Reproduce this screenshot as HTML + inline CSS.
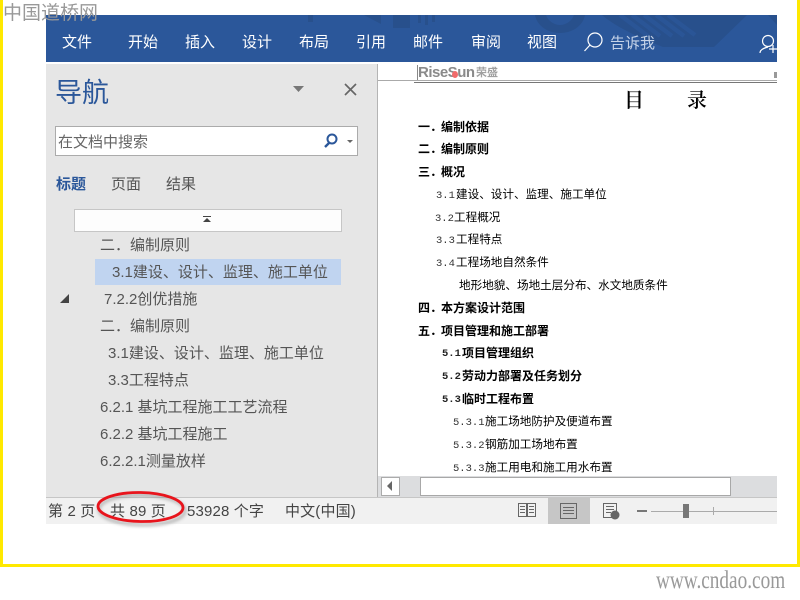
<!DOCTYPE html>
<html lang="zh"><head><meta charset="utf-8"><style>
html,body{margin:0;padding:0;background:#fff}
#p{position:relative;width:800px;height:600px;overflow:hidden;background:#fff;font-family:"Liberation Sans","Noto Sans CJK SC",sans-serif}
#p div,#p span.t{position:absolute}
.t{position:absolute;white-space:nowrap;line-height:20px;height:20px;margin-top:1px}
.m{font-size:15px;color:#fff;top:32px}
.n{font-size:15px;color:#555;font-family:"Liberation Sans","Noto Sans CJK SC",sans-serif}
.s{font-size:15px;color:#444;top:501px;letter-spacing:.15px}
.d{font-family:"Liberation Serif","WenQuanYi Zen Hei",serif;font-size:11.6px;color:#000}
.b{font-family:"Liberation Serif","Noto Sans CJK SC",sans-serif;font-size:12px;font-weight:700;color:#000;margin-top:0}
.o{font-family:"Liberation Mono",monospace;font-size:10.500px;color:#333;margin-top:2px}
.ob{font-family:"Liberation Mono",monospace;font-size:10.500px;font-weight:700;color:#222;margin-top:1px}
</style></head><body><div id="p">
<div style="left:0;top:0;width:3px;height:567px;background:#ffe900"></div>
<div style="left:0;top:564px;width:800px;height:3px;background:#ffe900"></div>
<div style="left:797px;top:0;width:3px;height:567px;background:#ffe900"></div>

<div style="left:46px;top:15px;width:731px;height:47px;background:#2b579a;overflow:hidden">
<svg width="731" height="47" style="position:absolute;left:0;top:0">
<g fill="#28508c">
<path d="M262 0h5v7h-5zM347 0h17v13h-17zM318 0h17v9zM372 0h3v8h-3zM379 0h3v10h-3zM386 0h3v7h-3z"/>
<path d="M489 0h50c-2 11-13 18-25 18s-23-7-25-18z"/>
<path d="M556 0H701L668 32H617C600 25 572 14 556 0z"/>
<path d="M722 0h9v10z"/>
</g>
<path d="M500 0h28c-2 6-8 10-14 10s-12-4-14-10z" fill="#2b579a"/>
<path d="M574 0l28 21M586 0l28 21M598 0l28 21M610 0l28 21M622 0l27 20" stroke="#2b579a" stroke-width="4.500" fill="none" opacity=".7"/>
<g stroke="#fff" fill="none" stroke-width="1.200">
<circle cx="549" cy="25" r="7"/><path d="M544 30l-5.500 6"/>
<circle cx="722" cy="26" r="5.500"/><path d="M714 38c0-3 4-5 8-6M723 34h8M727 30v8"/>
</g>
</svg>
</div>
<span class="t m" style="left:62px">文件</span>
<span class="t m" style="left:128px">开始</span>
<span class="t m" style="left:185px">插入</span>
<span class="t m" style="left:242px">设计</span>
<span class="t m" style="left:299px">布局</span>
<span class="t m" style="left:356px">引用</span>
<span class="t m" style="left:413px">邮件</span>
<span class="t m" style="left:471px">审阅</span>
<span class="t m" style="left:527px">视图</span>
<span class="t m" style="left:610px;color:#c5d3e8;top:33px">告诉我</span>

<div style="left:46px;top:64px;width:331px;height:434px;background:#e6e6e6"></div>
<div style="left:377px;top:64px;width:1px;height:434px;background:#b4b4b4"></div>
<span class="t" style="left:55px;top:78px;font-size:27px;line-height:28px;height:28px;color:#2b579a">导航</span>
<svg style="position:absolute;left:290px;top:81px" width="70" height="20">
<path d="M3 5h11l-5.500 6z" fill="#777"/>
<path d="M55 3l11 11M66 3L55 14" stroke="#666" stroke-width="1.700"/>
</svg>
<div style="left:55px;top:126px;width:301px;height:28px;background:#fff;border:1px solid #ababab"></div>
<span class="t" style="left:58px;top:132px;font-size:15px;color:#666">在文档中搜索</span>
<svg style="position:absolute;left:322px;top:132px" width="34" height="18">
<circle cx="10" cy="7" r="4.500" fill="none" stroke="#2b579a" stroke-width="2"/>
<path d="M7 11l-4 4" stroke="#2b579a" stroke-width="2.400"/>
<path d="M25 8h6l-3 3z" fill="#666"/>
</svg>
<span class="t" style="left:56px;top:174px;font-size:15px;color:#2b579a;font-weight:700">标题</span>
<span class="t" style="left:111px;top:174px;font-size:15px;color:#555">页面</span>
<span class="t" style="left:166px;top:174px;font-size:15px;color:#555">结果</span>

<div style="left:74px;top:209px;width:266px;height:21px;background:#fdfdfd;border:1px solid #c6c6c6"></div>
<svg style="position:absolute;left:203px;top:216px" width="10" height="8"><path d="M0 0h8v1H0zM4 2l4 4H0z" fill="#444"/></svg>
<div style="left:95px;top:259px;width:246px;height:26px;background:#c0d4f0"></div>
<svg style="position:absolute;left:60px;top:294px" width="9" height="9"><path d="M9 0v9H0z" fill="#444"/></svg>

<span class="t n" style="left:100px;top:235px">二．编制原则</span>
<span class="t n" style="left:112px;top:262px">3.1建设、设计、监理、施工单位</span>
<span class="t n" style="left:104px;top:289px">7.2.2创优措施</span>
<span class="t n" style="left:100px;top:316px">二．编制原则</span>
<span class="t n" style="left:108px;top:343px">3.1建设、设计、监理、施工单位</span>
<span class="t n" style="left:108px;top:370px">3.3工程特点</span>
<span class="t n" style="left:100px;top:397px">6.2.1 基坑工程施工工艺流程</span>
<span class="t n" style="left:100px;top:424px">6.2.2 基坑工程施工</span>
<span class="t n" style="left:100px;top:451px">6.2.2.1测量放样</span>

<!-- document header -->
<span class="t" style="left:418px;top:63px;margin-top:0;font-size:15px;font-weight:700;color:#8a8a8a;letter-spacing:-.5px">RiseSun</span>
<div style="left:452px;top:71px;width:6px;height:7px;border-radius:50%;background:#f06a6a"></div>
<span class="t" style="left:476px;top:63px;margin-top:0;font-size:11px;font-weight:700;color:#a0a0a0">荣盛</span>
<div style="left:774px;top:72px;width:3px;height:6px;background:#999"></div>
<div style="left:417px;top:65px;width:1px;height:16px;background:#888"></div>
<div style="left:378px;top:80px;width:399px;height:1px;background:#aaa"></div>
<div style="left:414px;top:82px;width:363px;height:1px;background:#777"></div>
<span class="t" style="left:624px;top:90px;font-size:20px;font-weight:600;color:#000;font-family:'Liberation Serif','Noto Serif CJK SC',serif">目</span>
<span class="t" style="left:687px;top:90px;font-size:20px;font-weight:600;color:#000;font-family:'Liberation Serif','Noto Serif CJK SC',serif">录</span>

<span class="t b" style="left:418px;top:117px">一．</span><span class="t b" style="left:441px;top:117px">编制依据</span>
<span class="t b" style="left:418px;top:139px">二．</span><span class="t b" style="left:441px;top:139px">编制原则</span>
<span class="t b" style="left:418px;top:162px">三．</span><span class="t b" style="left:441px;top:162px">概况</span>
<span class="t o" style="left:436px;top:184px">3.1</span><span class="t d" style="left:456px;top:184px">建设、设计、监理、施工单位</span>
<span class="t o" style="left:435px;top:207px">3.2</span><span class="t d" style="left:454px;top:207px">工程概况</span>
<span class="t o" style="left:436px;top:229px">3.3</span><span class="t d" style="left:456px;top:229px">工程特点</span>
<span class="t o" style="left:436px;top:252px">3.4</span><span class="t d" style="left:456px;top:252px">工程场地自然条件</span>
<span class="t d" style="left:459px;top:275px">地形地貌、场地土层分布、水文地质条件</span>
<span class="t b" style="left:418px;top:298px">四．</span><span class="t b" style="left:441px;top:298px">本方案设计范围</span>
<span class="t b" style="left:418px;top:321px">五．</span><span class="t b" style="left:441px;top:321px">项目管理和施工部署</span>
<span class="t ob" style="left:442px;top:343px">5.1</span><span class="t b" style="left:462px;top:343px">项目管理组织</span>
<span class="t ob" style="left:442px;top:366px">5.2</span><span class="t b" style="left:462px;top:366px">劳动力部署及任务划分</span>
<span class="t ob" style="left:442px;top:389px">5.3</span><span class="t b" style="left:462px;top:389px">临时工程布置</span>
<span class="t o" style="left:453px;top:411px">5.3.1</span><span class="t d" style="left:485px;top:411px">施工场地防护及便道布置</span>
<span class="t o" style="left:453px;top:434px">5.3.2</span><span class="t d" style="left:485px;top:434px">钢筋加工场地布置</span>
<span class="t o" style="left:453px;top:457px">5.3.3</span><span class="t d" style="left:485px;top:457px">施工用电和施工用水布置</span>

<!-- scrollbar -->
<div style="left:378px;top:476px;width:399px;height:22px;background:#dcdddf"></div>
<div style="left:381px;top:477px;width:17px;height:17px;background:#fff;border:1px solid #ababab"></div>
<svg style="position:absolute;left:386px;top:481px" width="8" height="10"><path d="M6 0v10L1 5z" fill="#666"/></svg>
<div style="left:420px;top:477px;width:309px;height:17px;background:#fff;border:1px solid #a8a8a8"></div>

<!-- status -->
<div style="left:46px;top:497px;width:731px;height:27px;background:#f1f1f1;border-top:1px solid #c6c6c6;box-sizing:border-box"></div>
<div style="left:548px;top:498px;width:42px;height:26px;background:#c6c6c6"></div>
<span class="t s" style="left:48px">第 2 页</span>
<span class="t s" style="left:110px">共 89 页</span>
<span class="t s" style="left:187px">53928 个字</span>
<span class="t s" style="left:285px">中文(中国)</span>
<svg style="position:absolute;left:510px;top:498px" width="267" height="26">
<g fill="none" stroke="#666" stroke-width="1">
<path d="M8.500 5.500h8v13h-8zM17.500 5.500h8v13h-8zM10 8.500h5M10 11.500h5M10 14.500h5M19 8.500h5M19 11.500h5M19 14.500h5"/>
<path d="M50.500 5.500h16v15h-16zM53 9.500h11M53 12.500h11M53 15.500h11"/>
<path d="M93.500 5.500h13v14h-13zM96 8.500h8M96 11.500h8M96 14.500h5"/>
</g>
<circle cx="105" cy="17" r="4.500" fill="#666"/>
<rect x="127" y="12" width="10" height="2" fill="#777"/>
<rect x="141" y="13" width="126" height="1" fill="#aaa"/>
<rect x="203" y="9" width="1" height="8" fill="#aaa"/>
<rect x="173" y="6" width="6" height="14" fill="#777"/>
</svg>

<!-- annotation ellipse -->
<svg style="position:absolute;left:85px;top:482px" width="115" height="55">
<defs><filter id="bl" x="-20%" y="-40%" width="140%" height="180%"><feGaussianBlur stdDeviation="1.500"/></filter></defs>
<ellipse cx="57" cy="28" rx="43" ry="15" fill="none" stroke="#777" stroke-width="3" opacity=".5" filter="url(#bl)" transform="rotate(1 57 28)"/>
<ellipse cx="55.500" cy="25" rx="42.500" ry="14.500" fill="none" stroke="#e8141c" stroke-width="2.800" transform="rotate(1 55 25)"/>
</svg>

<!-- watermarks -->
<span class="t" style="left:3px;top:1px;margin-top:0;height:22px;line-height:22px;font-size:19px;color:#999;font-family:'WenQuanYi Zen Hei','Noto Sans CJK SC',sans-serif">中国道桥网</span>
<span class="t" style="left:656px;top:570px;margin-top:0;height:22px;line-height:22px;font-size:25px;color:#999;font-family:'Liberation Serif',serif;transform:scaleX(.77);transform-origin:left center">www.cndao.com</span>
</div></body></html>
